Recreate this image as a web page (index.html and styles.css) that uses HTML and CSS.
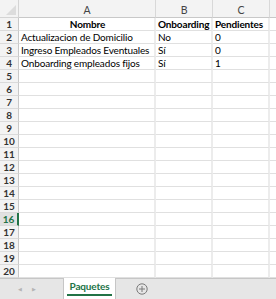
FILE: index.html
```html
<!DOCTYPE html>
<html>
<head>
<meta charset="utf-8">
<link rel="stylesheet" href="styles.css">
</head>
<body>
<div class="sheet">
  <div class="grid">
    <div class="corner"><span class="tri"></span></div>
    <div class="colh">A</div>
    <div class="colh">B</div>
    <div class="colh">C</div>
    <div class="colh last"></div>

    <div class="rowh">1</div><div class="cell b ctr">Nombre</div><div class="cell b">Onboarding</div><div class="cell b">Pendientes</div><div class="cell last"></div>
    <div class="rowh">2</div><div class="cell">Actualizacion de Domicilio</div><div class="cell">No</div><div class="cell">0</div><div class="cell last"></div>
    <div class="rowh">3</div><div class="cell">Ingreso Empleados Eventuales</div><div class="cell">Sí</div><div class="cell">0</div><div class="cell last"></div>
    <div class="rowh">4</div><div class="cell">Onboarding empleados fijos</div><div class="cell">Sí</div><div class="cell">1</div><div class="cell last"></div>
    <div class="rowh">5</div><div class="cell"></div><div class="cell"></div><div class="cell"></div><div class="cell last"></div>
    <div class="rowh">6</div><div class="cell"></div><div class="cell"></div><div class="cell"></div><div class="cell last"></div>
    <div class="rowh">7</div><div class="cell"></div><div class="cell"></div><div class="cell"></div><div class="cell last"></div>
    <div class="rowh">8</div><div class="cell"></div><div class="cell"></div><div class="cell"></div><div class="cell last"></div>
    <div class="rowh">9</div><div class="cell"></div><div class="cell"></div><div class="cell"></div><div class="cell last"></div>
    <div class="rowh">10</div><div class="cell"></div><div class="cell"></div><div class="cell"></div><div class="cell last"></div>
    <div class="rowh">11</div><div class="cell"></div><div class="cell"></div><div class="cell"></div><div class="cell last"></div>
    <div class="rowh">12</div><div class="cell"></div><div class="cell"></div><div class="cell"></div><div class="cell last"></div>
    <div class="rowh">13</div><div class="cell"></div><div class="cell"></div><div class="cell"></div><div class="cell last"></div>
    <div class="rowh">14</div><div class="cell"></div><div class="cell"></div><div class="cell"></div><div class="cell last"></div>
    <div class="rowh">15</div><div class="cell"></div><div class="cell"></div><div class="cell"></div><div class="cell last"></div>
    <div class="rowh sel">16</div><div class="cell"></div><div class="cell"></div><div class="cell"></div><div class="cell last"></div>
    <div class="rowh">17</div><div class="cell"></div><div class="cell"></div><div class="cell"></div><div class="cell last"></div>
    <div class="rowh">18</div><div class="cell"></div><div class="cell"></div><div class="cell"></div><div class="cell last"></div>
    <div class="rowh">19</div><div class="cell"></div><div class="cell"></div><div class="cell"></div><div class="cell last"></div>
    <div class="rowh">20</div><div class="cell"></div><div class="cell"></div><div class="cell"></div><div class="cell last"></div>
  </div>
  <div class="tabs">
    <div class="nav">
      <span class="arrow">&#9664;</span>
      <span class="arrow">&#9654;</span>
    </div>
    <div class="tab"><span class="tablabel">Paquetes</span></div>
    <div class="add">
      <svg width="12" height="12" viewBox="0 0 12 12">
        <circle cx="6" cy="6" r="5.2" fill="none" stroke="#7a7a7a" stroke-width="1"/>
        <path d="M6 3v6M3 6h6" stroke="#7a7a7a" stroke-width="1"/>
      </svg>
    </div>
  </div>
</div>
</body>
</html>
```
FILE: styles.css
```css
html, body {
  margin: 0;
  padding: 0;
  background: #ffffff;
}
.sheet {
  width: 276px;
  height: 299px;
  overflow: hidden;
  display: flex;
  flex-direction: column;
  font-family: "Lato", "Liberation Sans", sans-serif;
  font-size: 10px;
  letter-spacing: -0.15px;
  color: #000;
}
.grid {
  display: grid;
  grid-template-columns: 19px 137px 57px 57px 1fr;
  grid-template-rows: 18px repeat(20, 13px);
}
.grid > div { box-sizing: border-box; }
.corner {
  background: #f3f3f3;
  border-right: 1px solid #d4d4d4;
  border-bottom: 1px solid #d4d4d4;
  position: relative;
}
.tri {
  position: absolute;
  right: 2px;
  bottom: 2px;
  width: 0;
  height: 0;
  border-left: 10px solid transparent;
  border-bottom: 10px solid #dcdcdc;
}
.colh {
  background: #f3f3f3;
  border-right: 1px solid #d8d8d8;
  border-bottom: 1px solid #c8c8c8;
  color: #444;
  font-size: 10.5px;
  display: flex;
  align-items: center;
  justify-content: center;
  padding-top: 2px;
}
.colh.last { border-right: none; }
.rowh {
  background: #f3f3f3;
  border-right: 1px solid #c8c8c8;
  border-bottom: 1px solid #dadada;
  color: #333;
  font-weight: bold;
  font-size: 10px;
  display: flex;
  align-items: center;
  justify-content: center;
}
.rowh.sel {
  background: #e1e1e1;
  color: #217346;
  border-right: 2px solid #217346;
}
.cell {
  border-right: 2px solid #ececec;
  border-bottom: 1px solid #e0e0e0;
  padding-left: 2px;
  line-height: 12px;
  white-space: nowrap;
  overflow: hidden;
}
.cell.last { border-right: none; }
.cell.b { font-weight: bold; }
.cell.ctr { text-align: center; }
.tabs {
  height: 21px;
  background: #e6e6e6;
  border-top: 1px solid #c6c6c6;
  display: flex;
  box-sizing: border-box;
}
.nav {
  width: 64px;
  display: flex;
  align-items: center;
  justify-content: flex-start;
  gap: 10px;
  padding-left: 18px;
  box-sizing: border-box;
  border-right: 1px solid #c6c6c6;
}
.arrow {
  font-size: 5px;
  color: #b4b4b4;
}
.tab {
  width: 52px;
  background: #ffffff;
  margin-top: -1px;
  border-right: 1px solid #c6c6c6;
  display: flex;
  justify-content: center;
  padding-top: 2px;
  box-sizing: border-box;
}
.tablabel {
  color: #217346;
  font-weight: bold;
  font-size: 10px;
  height: 14px;
  padding: 0 3px;
  border-bottom: 2px solid #217346;
}
.add {
  display: flex;
  align-items: center;
  padding-left: 20px;
}
```
